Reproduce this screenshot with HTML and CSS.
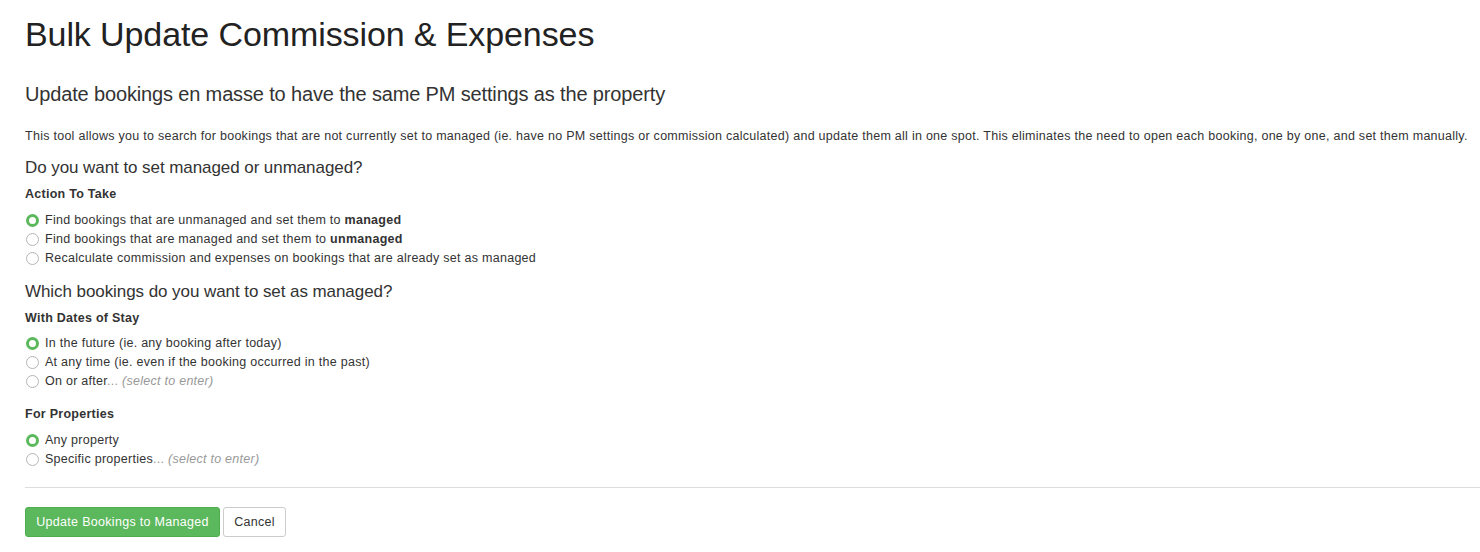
FILE: index.html
```html
<!DOCTYPE html>
<html lang="en">
<head>
<meta charset="utf-8">
<title>Bulk Update Commission &amp; Expenses</title>
<link rel="stylesheet" href="styles.css">
</head>
<body>
<div class="page">
  <h1 class="title">Bulk Update Commission &amp; Expenses</h1>
  <h3 class="subtitle">Update bookings en masse to have the same PM settings as the property</h3>
  <p class="intro">This tool allows you to search for bookings that are not currently set to managed (ie. have no PM settings or commission calculated) and update them all in one spot. This eliminates the need to open each booking, one by one, and set them manually.</p>

  <h4 class="question">Do you want to set managed or unmanaged?</h4>
  <div class="field-label">Action To Take</div>
  <div class="radios">
    <label class="radio"><input type="radio" name="action" checked><span>Find bookings that are unmanaged and set them to <b>managed</b></span></label>
    <label class="radio"><input type="radio" name="action"><span>Find bookings that are managed and set them to <b>unmanaged</b></span></label>
    <label class="radio"><input type="radio" name="action"><span>Recalculate commission and expenses on bookings that are already set as managed</span></label>
  </div>

  <h4 class="question q2">Which bookings do you want to set as managed?</h4>
  <div class="field-label fl2">With Dates of Stay</div>
  <div class="radios r2">
    <label class="radio"><input type="radio" name="dates" checked><span>In the future (ie. any booking after today)</span></label>
    <label class="radio"><input type="radio" name="dates"><span>At any time (ie. even if the booking occurred in the past)</span></label>
    <label class="radio"><input type="radio" name="dates"><span>On or after<span class="muted">...</span> <i class="muted">(select to enter)</i></span></label>
  </div>

  <div class="field-label fl3">For Properties</div>
  <div class="radios">
    <label class="radio"><input type="radio" name="props" checked><span>Any property</span></label>
    <label class="radio"><input type="radio" name="props"><span>Specific properties<span class="muted">...</span> <i class="muted">(select to enter)</i></span></label>
  </div>

  <hr class="divider">

  <div class="actions">
    <button class="btn btn-success" type="button">Update Bookings to Managed</button>
    <button class="btn btn-default" type="button">Cancel</button>
  </div>
</div>
</body>
</html>
```

FILE: styles.css
```css
* { box-sizing: border-box; }

html, body {
  margin: 0;
  padding: 0;
  background: #fff;
}

body {
  font-family: "Liberation Sans", Arial, sans-serif;
  font-size: 12.5px;
  letter-spacing: 0.27px;
  line-height: 17px;
  color: #333;
}

.page {
  padding: 0 0 0 25px;
}

.title {
  margin: 14px 0 0;
  font-size: 34px;
  letter-spacing: -0.1px;
  line-height: 40px;
  font-weight: 400;
  color: #222;
}

.subtitle {
  margin: 29px 0 0;
  font-size: 20px;
  letter-spacing: -0.15px;
  line-height: 22px;
  font-weight: 400;
  color: #333;
}

.intro {
  margin: 23px 0 0;
  line-height: 17px;
  white-space: nowrap;
}

.question {
  margin: 13px 0 0;
  font-size: 17px;
  letter-spacing: -0.07px;
  line-height: 19px;
  font-weight: 400;
  color: #333;
}

.question.q2 { margin-top: 14px; }

.field-label {
  margin-top: 9px;
  font-weight: 700;
  line-height: 17px;
}

.field-label.fl2 { margin-top: 9px; }
.field-label.fl3 { margin-top: 15px; }

.radios {
  margin-top: 8px;
  display: flex;
  flex-direction: column;
}

.radios.r2 { margin-top: 7px; }

.radio {
  display: flex;
  align-items: center;
  height: 19px;
  line-height: 19px;
  cursor: pointer;
}

.radio input {
  -webkit-appearance: none;
  appearance: none;
  margin: 0 6px 0 1px;
  width: 13px;
  height: 13px;
  flex: 0 0 13px;
  border: 1px solid #b5b5b5;
  border-radius: 50%;
  background: #fff;
}

.radio input:checked {
  border: 3.5px solid #5cb85c;
}

.radio b { font-weight: 700; }

.muted {
  color: #999;
}

i.muted { font-style: italic; }

.divider {
  margin: 18px 0 0;
  border: 0;
  border-top: 1px solid #ddd;
  height: 0;
}

.actions {
  margin-top: 19px;
  display: flex;
  gap: 3px;
}

.btn {
  font-family: "Liberation Sans", Arial, sans-serif;
  font-size: 12.5px;
  letter-spacing: 0.3px;
  line-height: 18px;
  height: 30px;
  padding: 5px 0;
  text-align: center;
  border-radius: 3px;
  border: 1px solid transparent;
  cursor: pointer;
}

.btn-success {
  background: #5cb85c;
  border-color: #4cae4c;
  color: #fff;
  width: 195px;
}

.btn-default {
  background: #fff;
  border-color: #ccc;
  color: #333;
  width: 63px;
}
```
